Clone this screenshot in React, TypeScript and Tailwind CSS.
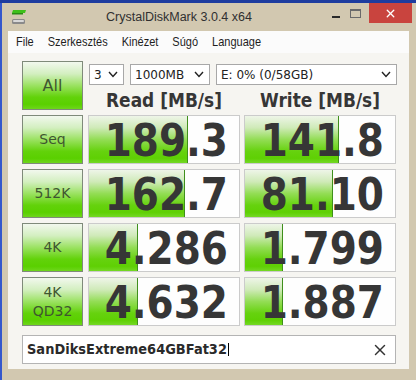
import React from "react";
import { X } from "lucide-react";

const rows = [
  { label: ["Seq"], read: "189.3", readBar: 99, write: "141.8", writeBar: 94 },
  { label: ["512K"], read: "162.7", readBar: 96, write: "81.10", writeBar: 88 },
  { label: ["4K"], read: "4.286", readBar: 49, write: "1.799", writeBar: 38 },
  { label: ["4K", "QD32"], read: "4.632", readBar: 49, write: "1.887", writeBar: 38 },
];

const Chevron = () => (
  <svg width="10" height="7" viewBox="0 0 10 7" className="shrink-0">
    <polyline points="1,1 5,5.5 9,1" fill="none" stroke="#222" strokeWidth="1.4" />
  </svg>
);

const Select = ({ w, text }: { w: string; text: string }) => (
  <div
    className={`${w} h-[21px] bg-white border border-[#a8a8a8] flex items-center justify-between pl-[4px] pr-[5px] text-[12px] text-[#222]`}
  >
    <span>{text}</span>
    <Chevron />
  </div>
);

const GreenButton = ({ label, big }: { label: string[]; big?: boolean }) => (
  <div
    className={`w-[61px] h-[49px] shrink-0 border border-[#7f8a7a] bg-[linear-gradient(to_bottom,#f2f8ee_0%,#d3efc0_25%,#9be262_50%,#62d20a_75%,#5ad000_90%,#6ed61c_100%)] flex flex-col items-center justify-center leading-[19px] text-[#3f5630] ${big ? "text-[16px]" : "text-[14px]"}`}
  >
    {label.map((l) => (
      <span key={l}>{l}</span>
    ))}
  </div>
);

const ValueBox = ({ value, bar }: { value: string; bar: number }) => (
  <div className="relative w-[152px] h-[49px] shrink-0 border border-[#cbcbcb] bg-[#fefefe]">
    <div
      className="absolute left-0 top-0 bottom-0 border-r border-[#3f8f1c] bg-[linear-gradient(to_bottom,#eef5e8_0%,#cfeab8_25%,#93dd55_50%,#66d20e_75%,#5fd004_90%,#74d824_100%)]"
      style={{ width: bar }}
    />
    <div className="relative h-full flex items-center justify-end pr-[11px] pt-[2px]">
      <span className="inline-block scale-y-[1.13] font-bold text-[39px] leading-[44px] text-[#363636]">
        {value}
      </span>
    </div>
  </div>
);

export default function App() {
  return (
    <div className="w-[416px] h-[380px] overflow-hidden flex flex-col bg-[#2f52c8] font-['DejaVu_Sans',sans-serif]">
      <div className="h-[3px] shrink-0 bg-[#1e3c9f]" />
      <div className="flex flex-1 min-h-0">
        <div className="w-[2px] shrink-0 bg-[#3457cc]" />
        <div className="flex-1 flex flex-col bg-[#d2c8b0]">
          {/* title bar */}
          <div className="h-[28px] shrink-0 flex items-start">
            <div className="w-[24px] h-[20px] ml-[8px] mt-[5px]">
              <svg width="18" height="18" viewBox="0 0 18 18">
                <path d="M3 2 H16 L15 5 H2 Z" fill="#3ec01a" />
                <rect x="2" y="5" width="11" height="1.5" fill="#2a8a14" />
                <rect x="2" y="11" width="13" height="5" rx="1.5" fill="#8a8a8a" />
                <rect x="3" y="12" width="11" height="2" rx="1" fill="#d8d8d8" />
              </svg>
            </div>
            <div className="flex-1 text-center pt-[5px] pr-[8px] text-[12.5px] text-[#303030] font-['Liberation_Sans',sans-serif]">
              CrystalDiskMark 3.0.4 x64
            </div>
            <div className="flex items-start">
              <div className="w-[8px] h-[2px] bg-[#2a2a2a] mt-[13px]" />
              <div className="w-[11px] h-[9px] border border-[#6a6a6a] border-t-2 mt-[6px] ml-[10px]" />
              <div className="w-[43px] h-[20px] bg-[#c9443e] ml-[8px] mr-[4px] flex items-center justify-center">
                <X size={13} color="#ffffff" strokeWidth={2.5} />
              </div>
            </div>
          </div>

          <div className="flex-1 flex flex-col pl-[6px] pr-[7px] pb-[11px] min-h-0">
            {/* menu */}
            <div className="h-[22px] shrink-0 bg-[#fbfbfb] flex items-center gap-[14px] pl-[8px] text-[11px] text-[#1e1e1e] font-['Liberation_Sans',sans-serif]">
              <span className="scale-y-[1.1] inline-block">File</span>
              <span className="scale-y-[1.1] inline-block">Szerkesztés</span>
              <span className="scale-y-[1.1] inline-block">Kinézet</span>
              <span className="scale-y-[1.1] inline-block">Súgó</span>
              <span className="scale-y-[1.1] inline-block">Language</span>
            </div>

            {/* content */}
            <div className="flex-1 bg-[#f6f5f1] pt-[8px] pl-[14px] flex flex-col gap-[5px]">
              <div className="flex gap-[5px]">
                <GreenButton label={["All"]} big />
                <div className="flex flex-col">
                  <div className="flex mt-[3px] ml-[1px] gap-[6px]">
                    <Select w="w-[35px]" text="3" />
                    <Select w="w-[80px]" text="1000MB" />
                    <Select w="w-[181px]" text="E: 0% (0/58GB)" />
                  </div>
                  <div className="flex gap-[4px] mt-[5px] text-[17px] font-bold text-[#363636] leading-[20px]">
                    <div className="w-[152px] text-center">
                      <span className="inline-block scale-y-[1.15]">Read [MB/s]</span>
                    </div>
                    <div className="w-[152px] text-center">
                      <span className="inline-block scale-y-[1.15]">Write [MB/s]</span>
                    </div>
                  </div>
                </div>
              </div>

              {rows.map((r) => (
                <div key={r.read} className="flex gap-[5px]">
                  <GreenButton label={r.label} />
                  <div className="flex gap-[4px]">
                    <ValueBox value={r.read} bar={r.readBar} />
                    <ValueBox value={r.write} bar={r.writeBar} />
                  </div>
                </div>
              ))}

              <div className="mt-[4px] w-[374px] h-[29px] bg-white border border-[#b4b4b4] flex items-center pl-[4px] pr-[6px]">
                <span className="text-[13px] font-bold text-[#2a2a2a] scale-y-[1.1] inline-block">
                  SanDiksExtreme64GBFat32
                </span>
                <span className="w-[1px] h-[13px] bg-black ml-[1px]" />
                <span className="flex-1" />
                <X size={18} color="#333" strokeWidth={2} />
              </div>
            </div>
          </div>
        </div>
      </div>
    </div>
  );
}
